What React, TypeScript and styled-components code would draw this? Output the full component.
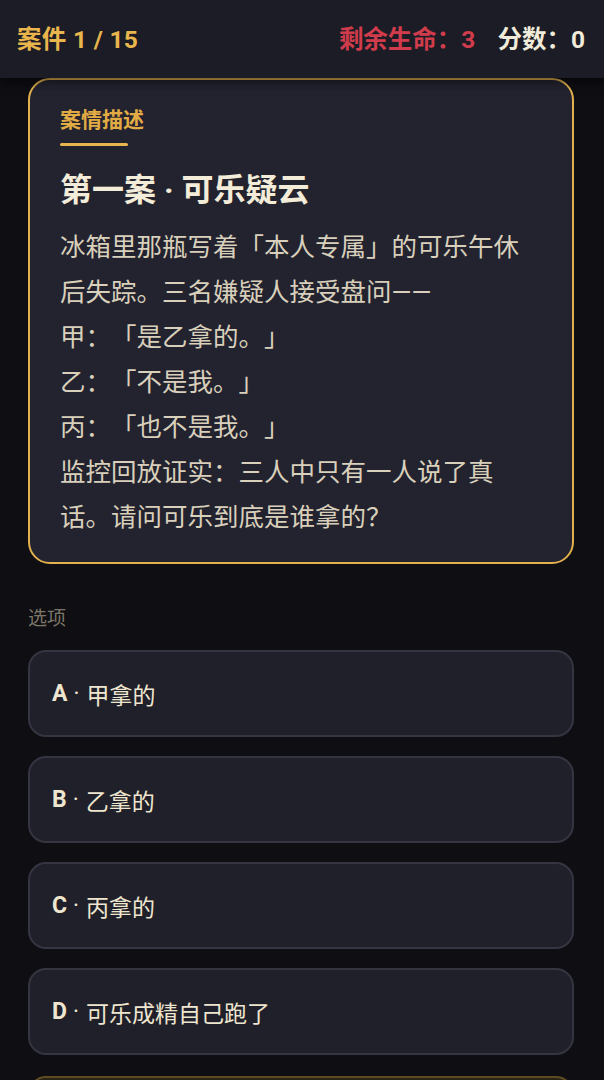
import styled, { createGlobalStyle } from 'styled-components';

const GlobalStyle = createGlobalStyle`
    html, body {
        margin: 0;
        padding: 0;
        background: #0e0e13;
    }

    body {
        font-family: Roboto, "Noto Sans CJK SC", sans-serif;
    }
`;

const options = [
    { key: 'A', text: '甲拿的' },
    { key: 'B', text: '乙拿的' },
    { key: 'C', text: '丙拿的' },
    { key: 'D', text: '可乐成精自己跑了' },
];

const storyLines = [
    '冰箱里那瓶写着「本人专属」的可乐午休后失踪。三名嫌疑人接受盘问——',
    '甲：「是乙拿的。」',
    '乙：「不是我。」',
    '丙：「也不是我。」',
    '监控回放证实：三人中只有一人说了真话。请问可乐到底是谁拿的？',
];

const App = () => {
    return (
        <Page>
            <GlobalStyle />
            <Header>
                <CaseCount>案件 1 / 15</CaseCount>
                <Stats>
                    <Stat $tone="life">剩余生命：3</Stat>
                    <Stat $tone="score">分数：0</Stat>
                </Stats>
            </Header>

            <Main>
                <CaseCard>
                    <CardLabel>案情描述</CardLabel>
                    <LabelBar />
                    <CaseTitle>第一案 · 可乐疑云</CaseTitle>
                    <Story>
                        { storyLines.map((line) => (
                            <StoryLine key={line}>{ line }</StoryLine>
                        )) }
                    </Story>
                </CaseCard>

                <SectionLabel>选项</SectionLabel>
                <OptionList>
                    { options.map((option) => (
                        <OptionButton key={option.key} type="button">
                            <OptionKey>{ option.key }</OptionKey>
                            <OptionDot>·</OptionDot>
                            { option.text }
                        </OptionButton>
                    )) }
                    <SubmitButton type="button">提交答案</SubmitButton>
                </OptionList>
            </Main>
        </Page>
    );
};

const Page = styled.div`
    min-height: 1080px;
    background: #0e0e13;
`;

const Header = styled.header`
    position: relative;
    z-index: 2;
    height: 78px;
    padding: 0 19px 4px 17px;
    box-sizing: border-box;

    background: #1b1c25;
    box-shadow: 0 4px 10px rgba(0, 0, 0, 0.55);

    display: flex;
    align-items: center;
    justify-content: space-between;

    font-size: 24.5px;
    font-weight: 700;
`;

const CaseCount = styled.div`
    color: #e8b64c;
    letter-spacing: 0.3px;
`;

const Stats = styled.div`
    display: flex;
    gap: 22px;
`;

const Stat = styled.div<{ $tone: 'life' | 'score' }>`
    color: ${({ $tone }) => ($tone === 'life' ? '#d13c4c' : '#f1ebda')};
`;

const Main = styled.main`
    padding: 0 30px 0 28px;
    display: flex;
    flex-direction: column;
`;

const CaseCard = styled.section`
    position: relative;
    z-index: 1;
    padding: 25px 30px 22px;

    background: #232330;
    border: 2px solid #e2b04e;
    border-radius: 22px;

    display: flex;
    flex-direction: column;
    align-items: flex-start;
`;

const CardLabel = styled.div`
    color: #e2ac45;
    font-size: 21px;
    font-weight: 700;
    line-height: 31px;
`;

const LabelBar = styled.div`
    margin-top: 7px;
    width: 68px;
    height: 3px;
    background: #e8b54e;
    border-radius: 2px;
`;

const CaseTitle = styled.h1`
    margin: 22px 0 0;
    color: #f3ecd8;
    font-size: 32px;
    font-weight: 700;
    line-height: 45px;
`;

const Story = styled.div`
    margin-top: 12px;
    color: #d9d0bb;
    font-size: 25.5px;
    line-height: 45px;
    text-spacing-trim: space-all;
`;

const StoryLine = styled.p`
    margin: 0;
`;

const SectionLabel = styled.div`
    margin-top: 41px;
    color: #7b7668;
    font-size: 19px;
    line-height: 27px;
`;

const OptionList = styled.div`
    margin-top: 18px;
    display: flex;
    flex-direction: column;
    gap: 19px;
`;

const OptionButton = styled.button`
    height: 87px;
    padding: 0 22px;
    box-sizing: border-box;

    background: #20202b;
    border: 2px solid #353542;
    border-radius: 18px;

    display: flex;
    align-items: center;

    color: #efe6cf;
    font-family: Roboto, "Noto Sans CJK SC", sans-serif;
    font-size: 23px;
    text-align: left;
`;

const OptionKey = styled.span`
    font-weight: 700;
`;

const OptionDot = styled.span`
    margin: 0 7px 0 6px;
`;

const SubmitButton = styled.button`
    height: 90px;
    margin-top: 2px;
    padding-top: 24px;

    background: #2a2416;
    border: 2px solid #5e4b22;
    border-radius: 18px;

    color: #e8b64c;
    font-family: Roboto, "Noto Sans CJK SC", sans-serif;
    font-size: 23px;
    font-weight: 700;
`;

export default App;
